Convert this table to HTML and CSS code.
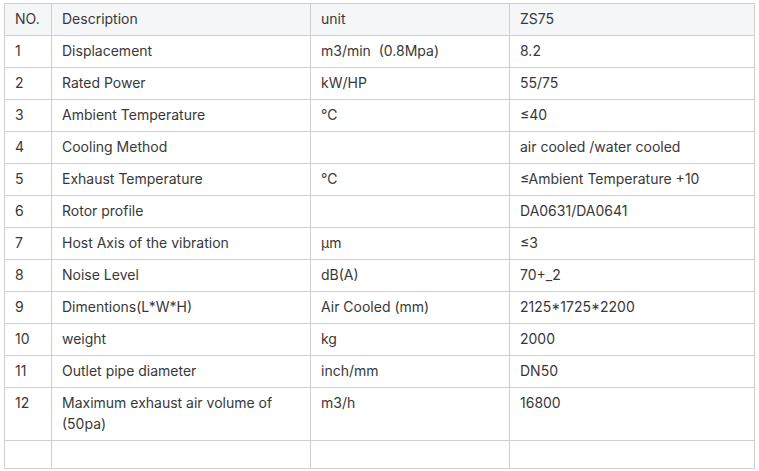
FILE: index.html
```html
<!DOCTYPE html>
<html>
<head>
<meta charset="utf-8">
<link rel="stylesheet" href="styles.css">
</head>
<body>
<div class="wrap">
<table class="spec">
<colgroup>
<col class="c1"><col class="c2"><col class="c3"><col class="c4">
</colgroup>
<thead>
<tr><th>NO.</th><th>Description</th><th>unit</th><th>ZS75</th></tr>
</thead>
<tbody>
<tr><td>1</td><td>Displacement</td><td>m3/min&nbsp; (0.8Mpa)</td><td>8.2</td></tr>
<tr><td>2</td><td>Rated Power</td><td>kW/HP</td><td>55/75</td></tr>
<tr><td>3</td><td>Ambient Temperature</td><td>℃</td><td>≤40</td></tr>
<tr><td>4</td><td>Cooling Method</td><td></td><td>air cooled /water cooled</td></tr>
<tr><td>5</td><td>Exhaust Temperature</td><td>℃</td><td>≤Ambient Temperature +10</td></tr>
<tr><td>6</td><td>Rotor profile</td><td></td><td>DA0631/DA0641</td></tr>
<tr><td>7</td><td>Host Axis of the vibration</td><td>μm</td><td>≤3</td></tr>
<tr><td>8</td><td>Noise Level</td><td>dB(A)</td><td>70+_2</td></tr>
<tr><td>9</td><td>Dimentions(L*W*H)</td><td>Air Cooled (mm)</td><td>2125*1725*2200</td></tr>
<tr><td>10</td><td>weight</td><td>kg</td><td>2000</td></tr>
<tr><td>11</td><td>Outlet pipe diameter</td><td>inch/mm</td><td>DN50</td></tr>
<tr class="tall"><td>12</td><td>Maximum exhaust air volume of (50pa)</td><td>m3/h</td><td>16800</td></tr>
<tr class="empty"><td></td><td></td><td></td><td></td></tr>
</tbody>
</table>
</div>
</body>
</html>
```
FILE: styles.css
```css
html, body {
  margin: 0;
  padding: 0;
  background: #ffffff;
}
.wrap {
  padding: 3px 0 0 4px;
}
.spec {
  border-collapse: collapse;
  table-layout: fixed;
  width: 750px;
  font-family: Inter, "Noto Sans", sans-serif;
  font-size: 14px;
  color: #383838;
}
.c1 { width: 47px; }
.c2 { width: 259px; }
.c3 { width: 199px; }
.c4 { width: 245px; }
.spec th, .spec td {
  border: 1px solid #cfcfcf;
  padding: 4px 10px 6px 10px;
  height: 21px;
  line-height: 21px;
  text-align: left;
  vertical-align: top;
  font-weight: 400;
}
.spec thead th {
  background: #f5f6f8;
}
.spec tr.empty td {
  height: 17px;
}
```
